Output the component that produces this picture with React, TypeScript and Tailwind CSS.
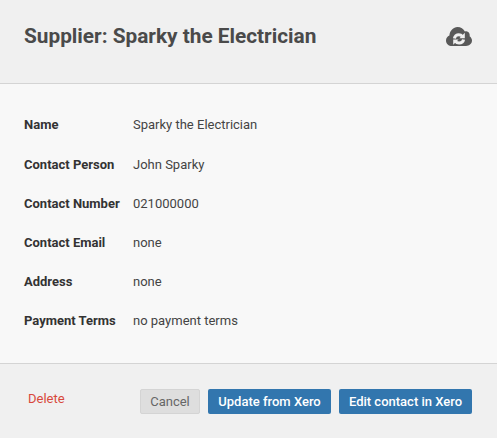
const rows = [
  ["Name", "Sparky the Electrician"],
  ["Contact Person", "John Sparky"],
  ["Contact Number", "021000000"],
  ["Contact Email", "none"],
  ["Address", "none"],
  ["Payment Terms", "no payment terms"],
];

function CloudSync() {
  return (
    <svg width="26" height="19" viewBox="0 0 26 19" className="block mt-px">
      <path
        fill="#595959"
        d="M6 19C2.700 19 0 16.600 0 13.400 0 11 1.400 9.200 3.400 8.400 3.800 3.600 7.400 0 11.500 0c3.300 0 6.100 1.800 7.400 4.500 .6-.2 1-.2 1.500-.2 2 .3 3.300 2 3.300 3.800 0 .4 0 .8-.1 1.100C25 10.200 26 11.800 26 13.600 26 16.700 23.400 19 20 19Z"
      />
      <path
        fill="none"
        stroke="#f0f0f0"
        strokeWidth="3"
        d="M8.400 11.500c.3-2.300 2.300-3.800 4.400-3.800 1.500 0 2.700.6 3.600 1.700M17.600 12.500c-.4 2.200-2.300 3.600-4.500 3.600-1.500 0-2.800-.6-3.700-1.700"
      />
      <path fill="#f0f0f0" d="M18.800 5.800v5.400h-5.400ZM7.200 17.800v-5.400h5.400Z" />
    </svg>
  );
}

export default function App() {
  return (
    <div className="w-[497px] h-[438px] flex flex-col bg-[#f8f8f8] font-['Roboto',sans-serif] text-[13px] text-[#333]">
      <header className="h-[84px] shrink-0 bg-[#f0f0f0] border-b border-[#d4d4d4] pl-6 pr-[25px] pt-[26px] flex items-start justify-between">
        <h1 className="text-[20.800px] font-bold text-[#4a4a4a] leading-[20px]">Supplier: Sparky the Electrician</h1>
        <CloudSync />
      </header>

      <main className="flex-1 pt-[21px] px-6">
        {rows.map(([label, value]) => (
          <div key={label} className="flex h-[39.200px] items-center pt-px">
            <span className="w-[109px] shrink-0 font-bold">{label}</span>
            <span className="text-[#444]">{value}</span>
          </div>
        ))}
      </main>

      <footer className="h-[75px] shrink-0 bg-[#f0f0f0] border-t border-[#d4d4d4] pl-7 pr-[25px] pt-[25px] flex items-start justify-between">
        <a className="text-[#d8483c] leading-[20px]">Delete</a>
        <div className="flex gap-2">
          <button className="h-[25px] w-[60px] rounded-[2px] bg-[#dedede] border border-[#d4d4d4] text-[#666]">Cancel</button>
          <button className="h-[25px] w-[123px] rounded-[2px] bg-[#3276ae] text-white font-medium">Update from Xero</button>
          <button className="h-[25px] w-[133px] rounded-[2px] bg-[#3276ae] text-white font-medium">Edit contact in Xero</button>
        </div>
      </footer>
    </div>
  );
}
